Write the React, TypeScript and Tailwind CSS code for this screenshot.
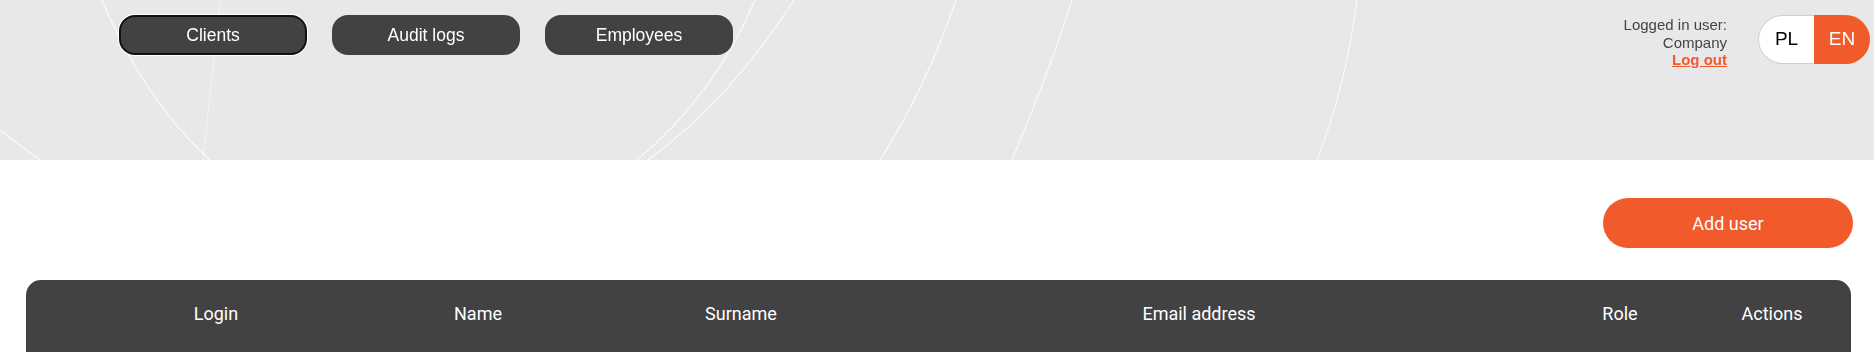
import React from 'react'

const navItems = [
    { label: 'Clients', active: true },
    { label: 'Audit logs', active: false },
    { label: 'Employees', active: false },
]

const columns = ['Login', 'Name', 'Surname', 'Email address', 'Role', 'Actions']

function HeaderArcs() {
    // decorative thin white arcs behind the top bar
    return (
        <svg className="absolute inset-0 h-full w-full pointer-events-none" viewBox="0 0 1874 160" preserveAspectRatio="none">
            <g fill="none" stroke="#ffffff" strokeWidth="1.3" opacity="0.75">
                <path d="M102,0 Q144,100 210,160" />
                <path d="M0,130 Q20,146 40,160" />
                <path d="M220,0 Q212,80 203,160" opacity="0.5" />
                <path d="M755,0 Q715,95 637,160" />
                <path d="M794,0 Q730,100 648,160" />
                <path d="M956,0 Q925,90 880,160" />
                <path d="M1072,0 Q1050,70 1012,160" />
                <path d="M1357,0 Q1345,90 1317,160" />
            </g>
        </svg>
    )
}

export default function App() {
    return (
        <div className="w-[1874px] h-[352px] overflow-hidden bg-white">
            <header className="relative h-[160px] bg-[#e8e8ea]">
                <HeaderArcs />
                <div className="relative flex items-start justify-between pl-[119px] pr-[4px] pt-[15px]">
                    <nav className="flex gap-[25px] font-['Liberation_Sans',Arial,sans-serif]">
                        {navItems.map((item) => (
                            <button
                                key={item.label}
                                className={`w-[188px] h-[40px] rounded-[16px] bg-[#424244] text-white text-[17.5px] flex items-center justify-center ${item.active ? 'border-2 border-[#111111] shadow-[0_0_0_1px_#ffffff]' : ''}`}
                            >
                                {item.label}
                            </button>
                        ))}
                    </nav>
                    <div className="flex items-start gap-[31px]">
                        <div className="mt-[1px] text-right text-[15px] leading-[17.5px] text-[#444444] font-['Liberation_Sans',Arial,sans-serif]">
                            <div>Logged in user:</div>
                            <div>Company</div>
                            <a className="font-bold text-[#f15a2b] underline">Log out</a>
                        </div>
                        <div className="flex h-[49px] w-[112px] font-['Liberation_Sans',Arial,sans-serif] text-[19px]">
                            <div className="flex w-[56px] items-center justify-center rounded-l-full border border-r-0 border-[#cfcfd2] bg-white text-black">
                                PL
                            </div>
                            <div className="flex w-[56px] items-center justify-center rounded-r-full bg-[#f15a2b] text-white">
                                EN
                            </div>
                        </div>
                    </div>
                </div>
            </header>

            <main className="px-[23px] font-['Roboto',sans-serif]">
                <div className="flex justify-end pt-[38px]">
                    <button className="mr-[-2px] h-[50px] w-[250px] rounded-full bg-[#f15a2b] text-[18px] text-white">
                        Add user
                    </button>
                </div>
                <div className="mt-[32px] ml-[3px] rounded-t-[15px] bg-[#424244] pl-[81px]">
                    <div className="grid grid-cols-[218px_306px_220px_696px_146px_158px] pt-[22px] pb-[29px] text-[18px] leading-[24px] text-white">
                        {columns.map((col) => (
                            <div key={col} className="text-center">
                                {col}
                            </div>
                        ))}
                    </div>
                </div>
            </main>
        </div>
    )
}
